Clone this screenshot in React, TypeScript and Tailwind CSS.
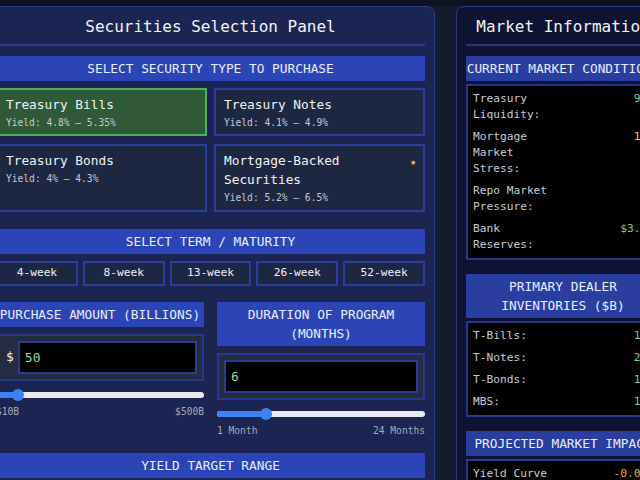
import React from 'react';

const securities = [
  { name: 'Treasury Bills', yieldRange: '4.8% – 5.35%', selected: true },
  { name: 'Treasury Notes', yieldRange: '4.1% – 4.9%' },
  { name: 'Treasury Bonds', yieldRange: '4% – 4.3%' },
  { name: 'Mortgage-Backed Securities', yieldRange: '5.2% – 6.5%', featured: true },
];

const terms = ['4-week', '8-week', '13-week', '26-week', '52-week'];

const conditions = [
  { label: 'Treasury Liquidity:', value: '92%', color: 'text-[#7fd08c]' },
  { label: 'Mortgage Market Stress:', value: '18%', color: 'text-[#e9cf62]' },
  { label: 'Repo Market Pressure:', value: '6%', color: 'text-[#e9cf62]' },
  { label: 'Bank Reserves:', value: '$3.2T', color: 'text-[#7fd08c]' },
];

const inventories = [
  { label: 'T-Bills:', value: '185' },
  { label: 'T-Notes:', value: '245' },
  { label: 'T-Bonds:', value: '120' },
  { label: 'MBS:', value: '165' },
];

const Bar: React.FC<{ children: React.ReactNode; dark?: boolean }> = ({ children, dark }) => (
  <div
    className={`py-[3px] text-center text-[12.8px] leading-[19px] text-[#e8ecff] ${
      dark ? 'bg-[#2a3e9f]' : 'bg-[#2b45b6]'
    }`}
  >
    {children}
  </div>
);

const Slider: React.FC<{ value: number; min: number; max: number }> = ({ value, min, max }) => {
  const pct = ((value - min) / (max - min)) * 100;
  return (
    <div className="relative h-[12px] mx-[6px]">
      <div className="absolute -left-[6px] -right-[6px] top-[3px] h-[6px] rounded-full bg-[#e9eaf0]" />
      <div
        className="absolute -left-[6px] top-[3px] h-[6px] rounded-l-full bg-[#3b82f6]"
        style={{ width: `calc(${pct}% + 6px)` }}
      />
      <div
        className="absolute top-0 h-[12px] w-[12px] -ml-[6px] rounded-full bg-[#3b82f6]"
        style={{ left: `${pct}%` }}
      />
    </div>
  );
};

const InfoBox: React.FC<{ rows: { label: string; value: string; color?: string }[] }> = ({ rows }) => (
  <div className="mt-[3px] border-2 border-[#27388a] bg-black pl-[5px] pr-[4px] py-[5px] flex flex-col gap-[6px]">
    {rows.map((r) => (
      <div key={r.label} className="flex items-start justify-between text-[11.2px] leading-[16px]">
        <span className="w-[88px] text-[#c9ccd6]">{r.label}</span>
        <span className={r.color ?? 'text-[#7fd08c]'}>{r.value}</span>
      </div>
    ))}
  </div>
);

const App: React.FC = () => {
  return (
    <div className="w-[640px] h-[480px] overflow-hidden bg-[#151b2e] font-['DejaVu_Sans_Mono',monospace]">
      <div className="h-[6px] bg-[#0f1220]" />
      <div className="flex items-start gap-[21px] -ml-[14px]">
        {/* left panel */}
        <section className="w-[449px] shrink-0 rounded-[8px] border border-[#2a3a8a] bg-[#1c2552] px-[9px] pt-[8px] pb-[20px]">
          <h1 className="pb-[5px] border-b-2 border-[#2c3c8e] text-center text-[16px] leading-[24px] text-[#f2f3f8]">
            Securities Selection Panel
          </h1>

          <div className="mt-[10px]">
            <Bar>SELECT SECURITY TYPE TO PURCHASE</Bar>
          </div>

          <div className="mt-[7px] grid grid-cols-2 gap-x-[7px] gap-y-[8px]">
            {securities.map((s) => (
              <div
                key={s.name}
                className={`relative border-2 px-[8px] pt-[5px] pb-[4px] ${
                  s.selected ? 'border-[#4fae5c] bg-[#2e5a37]' : 'border-[#2a3f9c] bg-[#1e2741]'
                }`}
              >
                <div className="pr-[14px] text-[12.8px] leading-[19px] text-[#f0f1f5]">{s.name}</div>
                <div className="mt-[2px] text-[9.6px] leading-[14.4px] text-[#c3c8d4]">Yield: {s.yieldRange}</div>
                {s.featured && (
                  <span className="absolute right-[7px] top-[9px] text-[9.6px] leading-[14px] text-[#f2cf4a]">★</span>
                )}
              </div>
            ))}
          </div>

          <div className="mt-[17px]">
            <Bar>SELECT TERM / MATURITY</Bar>
          </div>

          <div className="mt-[7px] grid grid-cols-5 gap-[5px]">
            {terms.map((t) => (
              <div
                key={t}
                className="border-2 border-[#2a3f9c] bg-[#1e2741] py-[2px] text-center text-[11.2px] leading-[16.8px] text-[#eef0f6]"
              >
                {t}
              </div>
            ))}
          </div>

          <div className="mt-[16px] grid grid-cols-2 items-start gap-x-[13px]">
            <div className="flex flex-col">
              <Bar>PURCHASE AMOUNT (BILLIONS)</Bar>
              <div className="mt-[7px] flex items-center border-2 border-[#27388a] bg-[#242c42] p-[5px]">
                <span className="ml-[3px] mr-[4px] text-[13px] text-[#f0f1f5]">$</span>
                <input
                  readOnly
                  defaultValue="50"
                  className="h-[33px] min-w-0 flex-1 border-2 border-[#2c3c94] bg-black px-[5px] text-[13px] text-[#8fd99a] outline-none"
                />
              </div>
              <div className="mt-[8px]">
                <Slider value={50} min={10} max={500} />
              </div>
              <div className="mt-[4px] flex justify-between text-[9.6px] leading-[14.4px] text-[#a3aabb]">
                <span>$10B</span>
                <span>$500B</span>
              </div>
            </div>

            <div className="flex flex-col">
              <Bar>DURATION OF PROGRAM (MONTHS)</Bar>
              <div className="mt-[7px] flex items-center border-2 border-[#27388a] bg-[#242c42] p-[5px]">
                <input
                  readOnly
                  defaultValue="6"
                  className="h-[33px] min-w-0 flex-1 border-2 border-[#2c3c94] bg-black px-[5px] text-[13px] text-[#8fd99a] outline-none"
                />
              </div>
              <div className="mt-[8px]">
                <Slider value={6} min={1} max={24} />
              </div>
              <div className="mt-[4px] flex justify-between text-[9.6px] leading-[14.4px] text-[#a3aabb]">
                <span>1 Month</span>
                <span>24 Months</span>
              </div>
            </div>
          </div>

          <div className="mt-[15px]">
            <Bar>YIELD TARGET RANGE</Bar>
          </div>
        </section>

        {/* right panel */}
        <section className="w-[214px] shrink-0 rounded-[8px] border border-[#2a3a8a] bg-[#0d1330] px-[9px] pt-[8px] pb-[20px]">
          <h2 className="pb-[5px] border-b-2 border-[#26357f] text-center text-[16px] leading-[24px] text-[#f2f3f8] whitespace-nowrap">
            Market Information
          </h2>

          <div className="mt-[10px]">
            <Bar dark>CURRENT MARKET CONDITIONS</Bar>
            <InfoBox rows={conditions} />
          </div>

          <div className="mt-[14px]">
            <Bar dark>PRIMARY DEALER INVENTORIES ($B)</Bar>
            <InfoBox rows={inventories} />
          </div>

          <div className="mt-[14px]">
            <Bar dark>PROJECTED MARKET IMPACT</Bar>
            <InfoBox rows={[{ label: 'Yield Curve Impact:', value: '-0.05%', color: 'text-[#e9a63e]' }]} />
          </div>
        </section>
      </div>
    </div>
  );
};

export default App;
